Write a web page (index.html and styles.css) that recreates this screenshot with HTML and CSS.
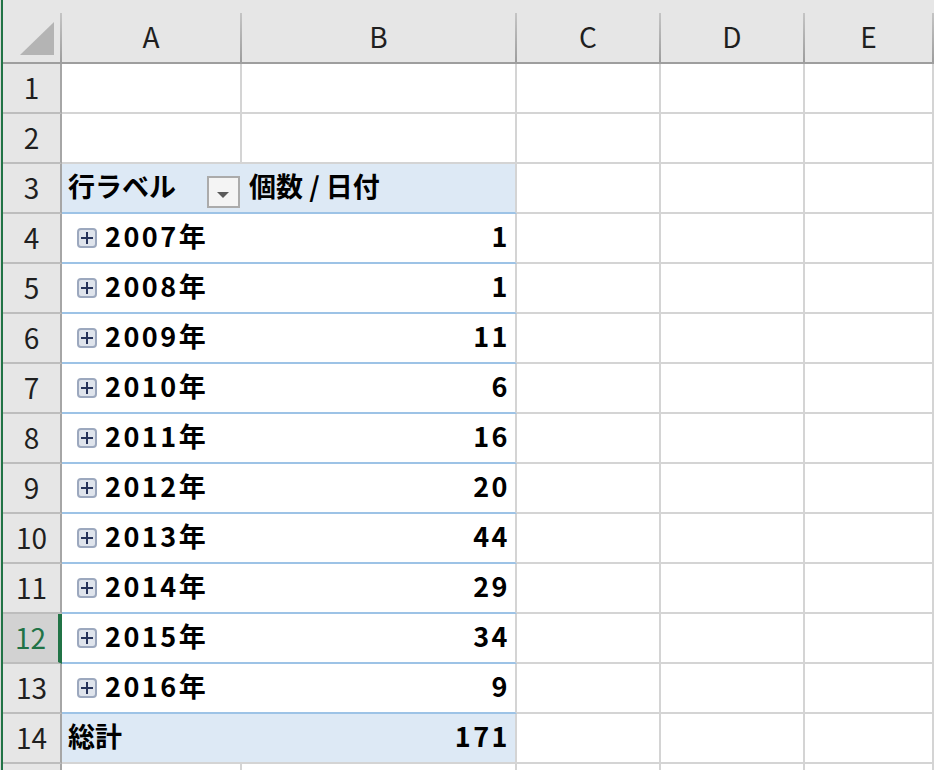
FILE: index.html
```html
<!DOCTYPE html>
<html lang="ja">
<head>
<meta charset="utf-8">
<title>Pivot</title>
<link rel="stylesheet" href="styles.css">
</head>
<body>
<div class="app">
  <div class="strip"></div>
  <div class="sheet">
    <div class="row head">
      <div class="hc corner"><svg width="57" height="62" viewBox="0 0 57 62"><polygon points="51,22 51,55 17,55" fill="#b4b4b4"/></svg></div>
      <div class="hc ca">A</div>
      <div class="hc cb">B</div>
      <div class="hc cc">C</div>
      <div class="hc cd">D</div>
      <div class="hc ce">E</div>
    </div>
    <div class="row"><div class="cell rh">1</div><div class="cell ca"></div><div class="cell cb"></div><div class="cell cc"></div><div class="cell cd"></div><div class="cell ce"></div></div>
    <div class="row"><div class="cell rh">2</div><div class="cell ca"></div><div class="cell cb"></div><div class="cell cc"></div><div class="cell cd"></div><div class="cell ce"></div></div>
    <div class="row">
      <div class="cell rh">3</div>
      <div class="cell ca pvh lbl">行ラベル<svg class="dd" width="33" height="32" viewBox="0 0 33 32"><rect x="1" y="1" width="31" height="30" fill="#f4f4f4" stroke="#ababab" stroke-width="2"/><path d="M10 16h12l-6 6z" fill="#5a5a5a"/></svg></div>
      <div class="cell cb pvh lblb">個数 / 日付</div>
      <div class="cell cc"></div><div class="cell cd"></div><div class="cell ce"></div>
    </div>
    <div class="row"><div class="cell rh">4</div><div class="cell ca pv lbl"><svg class="exp" width="20" height="20" viewBox="0 0 20 20"><rect x="1" y="1" width="18" height="18" rx="3" fill="#dfe4ec" stroke="#9ca8be" stroke-width="2"/><path d="M4 10h12M10 4v12" stroke="#26335a" stroke-width="2"/></svg><span class="num">2007</span>年</div><div class="cell cb pv val"><span class="num">1</span></div><div class="cell cc"></div><div class="cell cd"></div><div class="cell ce"></div></div>
    <div class="row"><div class="cell rh">5</div><div class="cell ca pv lbl"><svg class="exp" width="20" height="20" viewBox="0 0 20 20"><rect x="1" y="1" width="18" height="18" rx="3" fill="#dfe4ec" stroke="#9ca8be" stroke-width="2"/><path d="M4 10h12M10 4v12" stroke="#26335a" stroke-width="2"/></svg><span class="num">2008</span>年</div><div class="cell cb pv val"><span class="num">1</span></div><div class="cell cc"></div><div class="cell cd"></div><div class="cell ce"></div></div>
    <div class="row"><div class="cell rh">6</div><div class="cell ca pv lbl"><svg class="exp" width="20" height="20" viewBox="0 0 20 20"><rect x="1" y="1" width="18" height="18" rx="3" fill="#dfe4ec" stroke="#9ca8be" stroke-width="2"/><path d="M4 10h12M10 4v12" stroke="#26335a" stroke-width="2"/></svg><span class="num">2009</span>年</div><div class="cell cb pv val"><span class="num">11</span></div><div class="cell cc"></div><div class="cell cd"></div><div class="cell ce"></div></div>
    <div class="row"><div class="cell rh">7</div><div class="cell ca pv lbl"><svg class="exp" width="20" height="20" viewBox="0 0 20 20"><rect x="1" y="1" width="18" height="18" rx="3" fill="#dfe4ec" stroke="#9ca8be" stroke-width="2"/><path d="M4 10h12M10 4v12" stroke="#26335a" stroke-width="2"/></svg><span class="num">2010</span>年</div><div class="cell cb pv val"><span class="num">6</span></div><div class="cell cc"></div><div class="cell cd"></div><div class="cell ce"></div></div>
    <div class="row"><div class="cell rh">8</div><div class="cell ca pv lbl"><svg class="exp" width="20" height="20" viewBox="0 0 20 20"><rect x="1" y="1" width="18" height="18" rx="3" fill="#dfe4ec" stroke="#9ca8be" stroke-width="2"/><path d="M4 10h12M10 4v12" stroke="#26335a" stroke-width="2"/></svg><span class="num">2011</span>年</div><div class="cell cb pv val"><span class="num">16</span></div><div class="cell cc"></div><div class="cell cd"></div><div class="cell ce"></div></div>
    <div class="row"><div class="cell rh">9</div><div class="cell ca pv lbl"><svg class="exp" width="20" height="20" viewBox="0 0 20 20"><rect x="1" y="1" width="18" height="18" rx="3" fill="#dfe4ec" stroke="#9ca8be" stroke-width="2"/><path d="M4 10h12M10 4v12" stroke="#26335a" stroke-width="2"/></svg><span class="num">2012</span>年</div><div class="cell cb pv val"><span class="num">20</span></div><div class="cell cc"></div><div class="cell cd"></div><div class="cell ce"></div></div>
    <div class="row"><div class="cell rh">10</div><div class="cell ca pv lbl"><svg class="exp" width="20" height="20" viewBox="0 0 20 20"><rect x="1" y="1" width="18" height="18" rx="3" fill="#dfe4ec" stroke="#9ca8be" stroke-width="2"/><path d="M4 10h12M10 4v12" stroke="#26335a" stroke-width="2"/></svg><span class="num">2013</span>年</div><div class="cell cb pv val"><span class="num">44</span></div><div class="cell cc"></div><div class="cell cd"></div><div class="cell ce"></div></div>
    <div class="row"><div class="cell rh">11</div><div class="cell ca pv lbl"><svg class="exp" width="20" height="20" viewBox="0 0 20 20"><rect x="1" y="1" width="18" height="18" rx="3" fill="#dfe4ec" stroke="#9ca8be" stroke-width="2"/><path d="M4 10h12M10 4v12" stroke="#26335a" stroke-width="2"/></svg><span class="num">2014</span>年</div><div class="cell cb pv val"><span class="num">29</span></div><div class="cell cc"></div><div class="cell cd"></div><div class="cell ce"></div></div>
    <div class="row"><div class="cell rh sel">12</div><div class="cell ca pv lbl"><svg class="exp" width="20" height="20" viewBox="0 0 20 20"><rect x="1" y="1" width="18" height="18" rx="3" fill="#dfe4ec" stroke="#9ca8be" stroke-width="2"/><path d="M4 10h12M10 4v12" stroke="#26335a" stroke-width="2"/></svg><span class="num">2015</span>年</div><div class="cell cb pv val"><span class="num">34</span></div><div class="cell cc"></div><div class="cell cd"></div><div class="cell ce"></div></div>
    <div class="row"><div class="cell rh">13</div><div class="cell ca pv lbl"><svg class="exp" width="20" height="20" viewBox="0 0 20 20"><rect x="1" y="1" width="18" height="18" rx="3" fill="#dfe4ec" stroke="#9ca8be" stroke-width="2"/><path d="M4 10h12M10 4v12" stroke="#26335a" stroke-width="2"/></svg><span class="num">2016</span>年</div><div class="cell cb pv val"><span class="num">9</span></div><div class="cell cc"></div><div class="cell cd"></div><div class="cell ce"></div></div>
    <div class="row"><div class="cell rh">14</div><div class="cell ca pvt lbl">総計</div><div class="cell cb pvt val"><span class="num">171</span></div><div class="cell cc"></div><div class="cell cd"></div><div class="cell ce"></div></div>
    <div class="row"><div class="cell rh"></div><div class="cell ca"></div><div class="cell cb"></div><div class="cell cc"></div><div class="cell cd"></div><div class="cell ce"></div></div>
  </div>
</div>
</body>
</html>
```
FILE: styles.css
```css
html, body {
  margin: 0;
  padding: 0;
  background: #ffffff;
  overflow: hidden;
}
body {
  font-family: "Noto Sans CJK JP", "Noto Sans", sans-serif;
  color: #000;
}
.app {
  display: flex;
  height: 770px;
  overflow: hidden;
}
.strip {
  flex: none;
  width: 3px;
  background: linear-gradient(to right, #d9d9d9 1px, #217346 1px);
}
.sheet {
  flex: 1;
  min-width: 0;
  display: flex;
  flex-direction: column;
}
.row {
  display: flex;
  flex: none;
  height: 50px;
}
.cell {
  box-sizing: border-box;
  flex: none;
  height: 100%;
  display: flex;
  align-items: center;
  padding-bottom: 5px;
  border-right: 2px solid #d4d4d4;
  border-bottom: 2px solid #d4d4d4;
}
.rh, .corner { width: 59px; }
.ca { width: 180px; }
.cb { width: 275px; }
.cc, .cd { width: 144px; }
.ce { flex: 1; }

/* column header */
.head {
  height: 64px;
  box-sizing: border-box;
  background: #e6e6e6;
  border-bottom: 2px solid #9e9e9e;
}
.hc {
  box-sizing: border-box;
  flex: none;
  height: 100%;
  display: flex;
  align-items: center;
  justify-content: center;
  padding-top: 9px;
  font-size: 28px;
  color: #1f1f1f;
  border-style: solid;
  border-width: 0 2px 0 0;
  border-image: linear-gradient(to bottom, transparent 14px, #c4c4c4 14px, #9c9c9c) 1;
}
.hc.ce { flex: 1; }
.corner {
  padding: 0;
  align-items: flex-start;
  justify-content: flex-start;
}
.corner svg { display: block; }

/* row header */
.rh {
  justify-content: center;
  background: #e6e6e6;
  border-right-color: #a6a6a6;
  border-bottom-color: #bdbdbd;
  font-size: 28px;
  color: #1f1f1f;
  padding-bottom: 3px;
}
.rh.sel {
  background: #d2d2d2;
  color: #217346;
  border-right: 4px solid #217346;
}

/* pivot */
.pvh {
  background: #dde9f5;
  border-bottom-color: #9dc3e6;
}
.pv { border-bottom-color: #9dc3e6; }
.pvt { background: #dde9f5; }
.ca.pvh, .ca.pv, .ca.pvt { border-right-width: 0; }

.lbl {
  font-weight: bold;
  font-size: 27px;
  padding-left: 6px;
  white-space: nowrap;
}
.lblb {
  font-weight: bold;
  font-size: 27px;
  padding-left: 7px;
  white-space: nowrap;
}
.val {
  justify-content: flex-end;
  font-weight: bold;
  font-size: 27px;
  padding-right: 6px;
}
.num { letter-spacing: 2.5px; }
.val .num { margin-right: -1px; }
.dd {
  flex: none;
  margin-left: auto;
  margin-right: 2px;
  align-self: flex-end;
  margin-bottom: -1px;
}
.exp {
  flex: none;
  margin: 4px 8px 0 9px;
}
```
